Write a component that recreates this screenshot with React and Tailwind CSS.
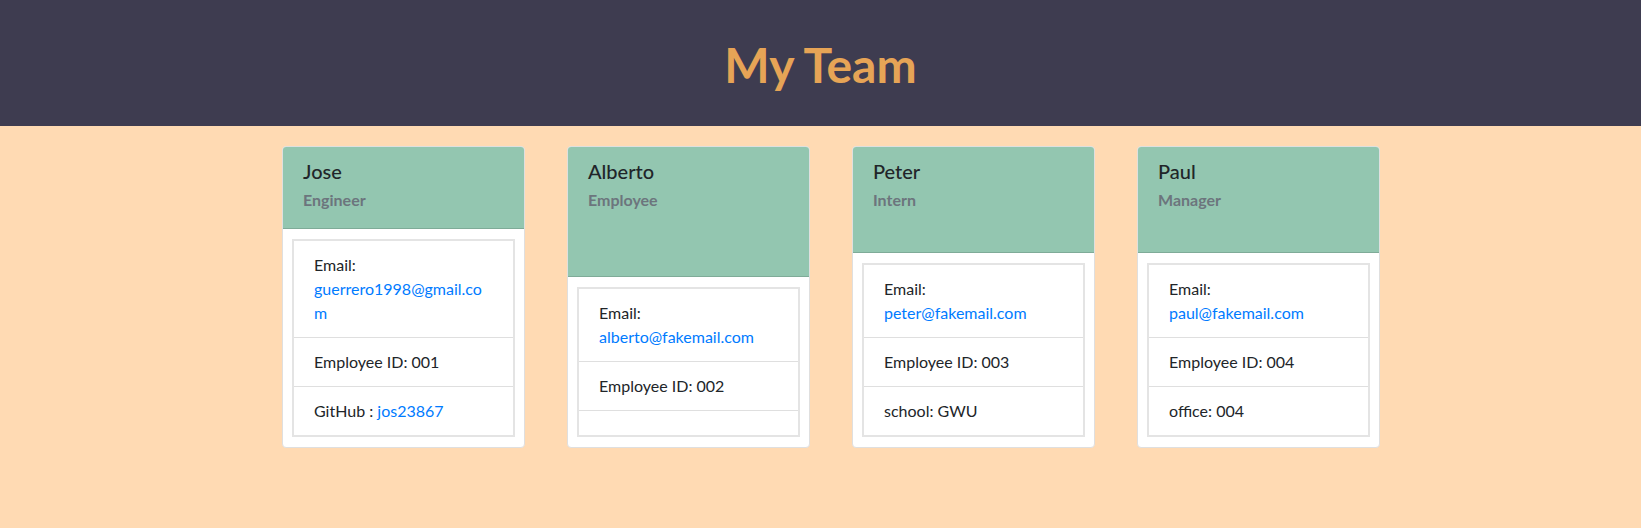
const team = [
  {
    name: "Jose",
    role: "Engineer",
    id: "001",
    email: "guerrero1998@gmail.com",
    extra: { label: "GitHub : ", value: "jos23867", link: true },
  },
  {
    name: "Alberto",
    role: "Employee",
    id: "002",
    email: "alberto@fakemail.com",
    extra: null,
  },
  {
    name: "Peter",
    role: "Intern",
    id: "003",
    email: "peter@fakemail.com",
    extra: { label: "school: ", value: "GWU" },
  },
  {
    name: "Paul",
    role: "Manager",
    id: "004",
    email: "paul@fakemail.com",
    extra: { label: "office: ", value: "004" },
  },
];

const EmployeeCard = ({ member }) => {
  return (
    <div className="w-[243px] h-full flex flex-col bg-white border border-[#dfdfdf] rounded-[4px] overflow-hidden">
      <div className="flex-1 bg-[#93c6b0] border-b border-[#7fab98] px-5 pt-3 pb-[18px]">
        <h5 className="text-[20px] leading-[24px] font-medium text-[#212529]">
          {member.name}
        </h5>
        <h6 className="mt-[7px] text-[16px] leading-[20px] font-bold text-[#6c757d]">
          {member.role}
        </h6>
      </div>
      <div className="pt-[10px] px-[9px] pb-[10px]">
        <ul className="border-2 border-[#e4e4e4] text-[16px] leading-6 text-[#212529]">
          <li className="px-5 py-3">
            Email:
            <a href="#" className="block break-words text-[#007bff]">
              {member.email}
            </a>
          </li>
          <li className="px-5 py-3 border-t border-[#dfdfdf]">
            Employee ID: {member.id}
          </li>
          <li className="px-5 py-3 border-t border-[#dfdfdf]">
            {member.extra && (
              <>
                {member.extra.label}
                {member.extra.link ? (
                  <a href="#" className="text-[#007bff]">
                    {member.extra.value}
                  </a>
                ) : (
                  member.extra.value
                )}
              </>
            )}
          </li>
        </ul>
      </div>
    </div>
  );
};

const App = () => {
  return (
    <div className="min-h-screen bg-[#ffdab3] font-['Lato',sans-serif]">
      <header className="h-[126px] bg-[#3e3c50] flex items-center justify-center">
        <h1 className="pt-[3px] text-[48px] leading-[58px] font-bold text-[#e6a456]">
          My Team
        </h1>
      </header>

      <main className="mx-auto w-[1140px] grid grid-cols-4 pt-5">
        {team.map((member) => (
          <div key={member.id} className="pl-[31.5px]">
            <EmployeeCard member={member} />
          </div>
        ))}
      </main>
    </div>
  );
};

export default App;
